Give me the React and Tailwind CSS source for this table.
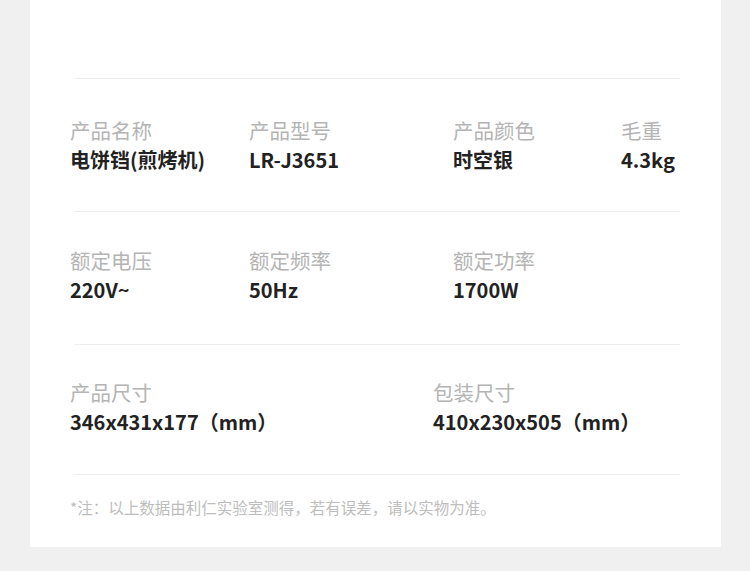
export default function App() {
  const font = { fontFamily: '"Noto Sans CJK SC", "Noto Sans", sans-serif' };
  const Label = ({ children }) => (
    <div className="text-[20.5px] leading-[30px] text-[#b4b4b4] font-normal whitespace-nowrap">{children}</div>
  );
  const Value = ({ children }) => (
    <div className="text-[20px] leading-[30px] text-[#222222] font-bold whitespace-nowrap">{children}</div>
  );
  const Line = () => <div className="h-px bg-[#eeeeee] ml-[44px] mr-[41px]" />;
  return (
    <div className="w-[750px] min-h-[571px] bg-[#f0f0f0]" style={font}>
      <div className="ml-[30px] w-[691px] h-[547px] bg-white pt-[78px]">
        <Line />
        <div className="flex pl-[40px] pt-[36px] pb-[36px]">
          <div className="w-[179px]"><Label>产品名称</Label><Value>电饼铛(煎烤机)</Value></div>
          <div className="w-[204px]"><Label>产品型号</Label><Value>LR-J3651</Value></div>
          <div className="w-[168px]"><Label>产品颜色</Label><Value>时空银</Value></div>
          <div><Label>毛重</Label><Value>4.3kg</Value></div>
        </div>
        <Line />
        <div className="flex pl-[40px] pt-[33px] pb-[39px]">
          <div className="w-[179px]"><Label>额定电压</Label><Value>220V~</Value></div>
          <div className="w-[204px]"><Label>额定频率</Label><Value>50Hz</Value></div>
          <div className="w-[168px]"><Label>额定功率</Label><Value>1700W</Value></div>
        </div>
        <Line />
        <div className="flex pl-[40px] pt-[32px] pb-[37px]">
          <div className="w-[363px]"><Label>产品尺寸</Label><Value>346x431x177（mm）</Value></div>
          <div><Label>包装尺寸</Label><Value>410x230x505（mm）</Value></div>
        </div>
        <Line />
        <div className="pl-[40px] pt-[21px] text-[15.5px] leading-[22px] text-[#bdbdbd] whitespace-nowrap">
          *注：以上数据由利仁实验室测得，若有误差，请以实物为准。
        </div>
      </div>
    </div>
  );
}
